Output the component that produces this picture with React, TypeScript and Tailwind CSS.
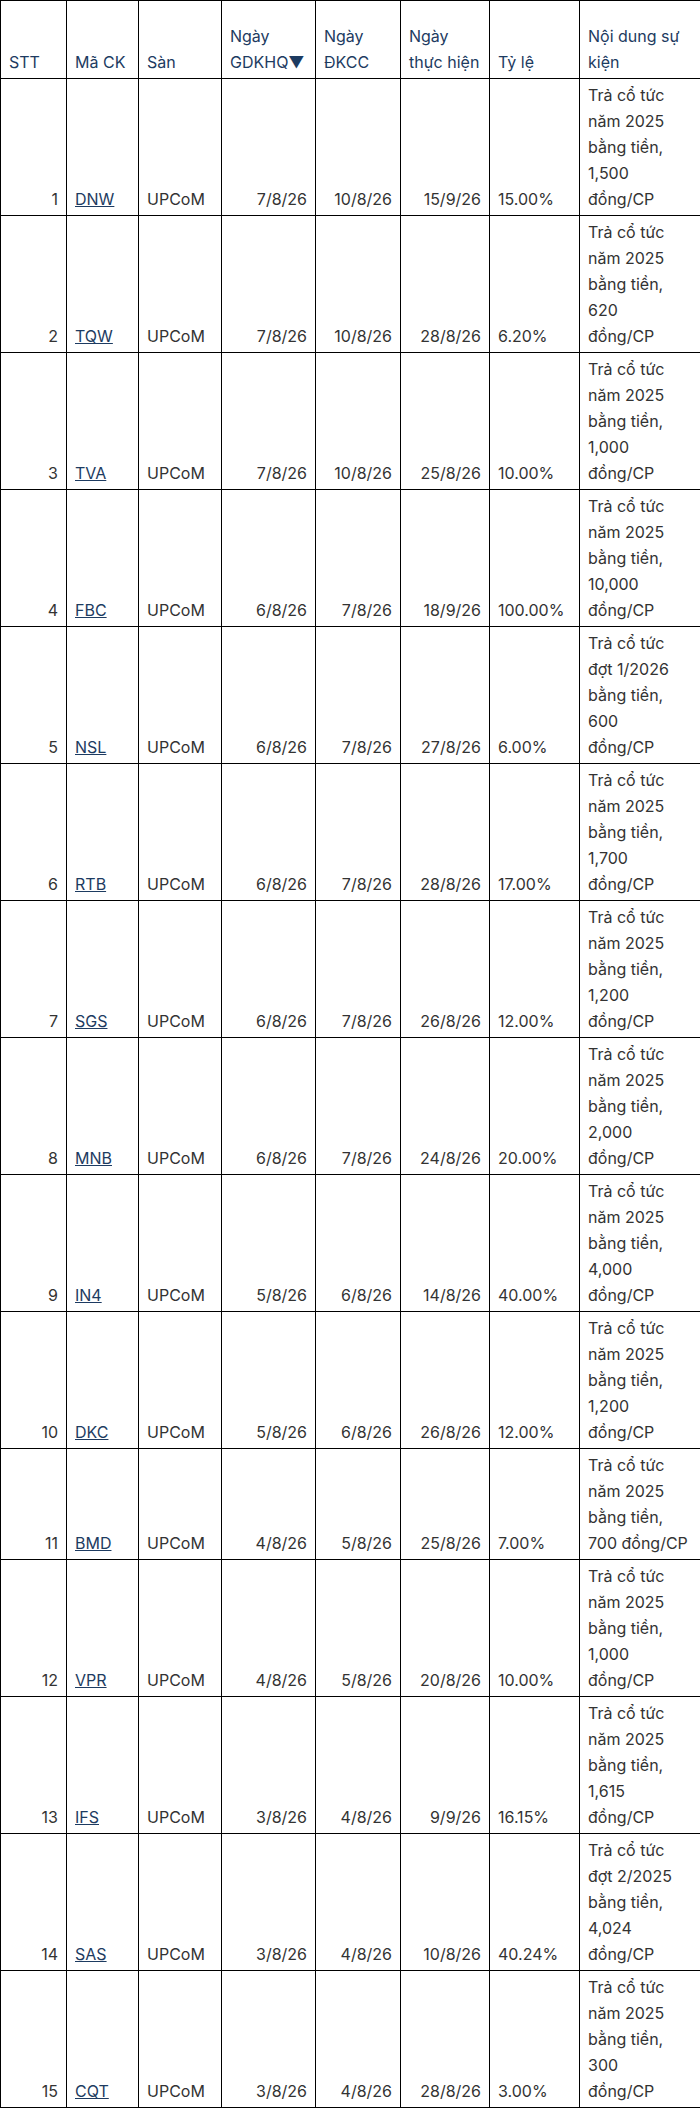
import React from 'react'

type Row = {
  stt: number
  code: string
  exchange: string
  exDate: string
  recordDate: string
  payDate: string
  ratio: string
  period: string
  amount: string
  // amount and "đồng/CP" stay on one line
  oneLine?: boolean
}

const rows: Row[] = [
  { stt: 1, code: 'DNW', exchange: 'UPCoM', exDate: '7/8/26', recordDate: '10/8/26', payDate: '15/9/26', ratio: '15.00%', period: 'năm 2025', amount: '1,500' },
  { stt: 2, code: 'TQW', exchange: 'UPCoM', exDate: '7/8/26', recordDate: '10/8/26', payDate: '28/8/26', ratio: '6.20%', period: 'năm 2025', amount: '620' },
  { stt: 3, code: 'TVA', exchange: 'UPCoM', exDate: '7/8/26', recordDate: '10/8/26', payDate: '25/8/26', ratio: '10.00%', period: 'năm 2025', amount: '1,000' },
  { stt: 4, code: 'FBC', exchange: 'UPCoM', exDate: '6/8/26', recordDate: '7/8/26', payDate: '18/9/26', ratio: '100.00%', period: 'năm 2025', amount: '10,000' },
  { stt: 5, code: 'NSL', exchange: 'UPCoM', exDate: '6/8/26', recordDate: '7/8/26', payDate: '27/8/26', ratio: '6.00%', period: 'đợt 1/2026', amount: '600' },
  { stt: 6, code: 'RTB', exchange: 'UPCoM', exDate: '6/8/26', recordDate: '7/8/26', payDate: '28/8/26', ratio: '17.00%', period: 'năm 2025', amount: '1,700' },
  { stt: 7, code: 'SGS', exchange: 'UPCoM', exDate: '6/8/26', recordDate: '7/8/26', payDate: '26/8/26', ratio: '12.00%', period: 'năm 2025', amount: '1,200' },
  { stt: 8, code: 'MNB', exchange: 'UPCoM', exDate: '6/8/26', recordDate: '7/8/26', payDate: '24/8/26', ratio: '20.00%', period: 'năm 2025', amount: '2,000' },
  { stt: 9, code: 'IN4', exchange: 'UPCoM', exDate: '5/8/26', recordDate: '6/8/26', payDate: '14/8/26', ratio: '40.00%', period: 'năm 2025', amount: '4,000' },
  { stt: 10, code: 'DKC', exchange: 'UPCoM', exDate: '5/8/26', recordDate: '6/8/26', payDate: '26/8/26', ratio: '12.00%', period: 'năm 2025', amount: '1,200' },
  { stt: 11, code: 'BMD', exchange: 'UPCoM', exDate: '4/8/26', recordDate: '5/8/26', payDate: '25/8/26', ratio: '7.00%', period: 'năm 2025', amount: '700', oneLine: true },
  { stt: 12, code: 'VPR', exchange: 'UPCoM', exDate: '4/8/26', recordDate: '5/8/26', payDate: '20/8/26', ratio: '10.00%', period: 'năm 2025', amount: '1,000' },
  { stt: 13, code: 'IFS', exchange: 'UPCoM', exDate: '3/8/26', recordDate: '4/8/26', payDate: '9/9/26', ratio: '16.15%', period: 'năm 2025', amount: '1,615' },
  { stt: 14, code: 'SAS', exchange: 'UPCoM', exDate: '3/8/26', recordDate: '4/8/26', payDate: '10/8/26', ratio: '40.24%', period: 'đợt 2/2025', amount: '4,024' },
  { stt: 15, code: 'CQT', exchange: 'UPCoM', exDate: '3/8/26', recordDate: '4/8/26', payDate: '28/8/26', ratio: '3.00%', period: 'năm 2025', amount: '300' },
]

const th = 'border border-black px-2 pt-[22px] pb-[3px] text-left align-bottom font-normal text-[#1d3b61]'
const td = 'border border-black px-2 py-[3px] align-bottom text-[#333333]'

export default function App() {
  return (
    <div className="w-[700px] bg-white font-['Inter',sans-serif] text-[16px] leading-[26px]">
      <table className="w-[700px] table-fixed border-collapse">
        <colgroup>
          <col className="w-[66px]" />
          <col className="w-[72px]" />
          <col className="w-[83px]" />
          <col className="w-[94px]" />
          <col className="w-[85px]" />
          <col className="w-[89px]" />
          <col className="w-[90px]" />
          <col className="w-[121px]" />
        </colgroup>
        <thead>
          <tr>
            <th className={th}>STT</th>
            <th className={th}>Mã CK</th>
            <th className={th}>Sàn</th>
            <th className={th}>Ngày GDKHQ▼</th>
            <th className={th}>Ngày ĐKCC</th>
            <th className={th}>Ngày thực hiện</th>
            <th className={th}>Tỷ lệ</th>
            <th className={th}>Nội dung sự kiện</th>
          </tr>
        </thead>
        <tbody>
          {rows.map((r) => (
            <tr key={r.stt}>
              <td className={`${td} text-right`}>{r.stt}</td>
              <td className={td}>
                <a href="#" className="text-[#1d3b61] underline">{r.code}</a>
              </td>
              <td className={td}>{r.exchange}</td>
              <td className={`${td} text-right`}>{r.exDate}</td>
              <td className={`${td} text-right`}>{r.recordDate}</td>
              <td className={`${td} text-right`}>{r.payDate}</td>
              <td className={td}>{r.ratio}</td>
              <td className={`${td} text-[#1d3b61]`}>
                Trả cổ tức {r.period} bằng tiền, {r.amount}
                {r.oneLine ? ' ' : <br />}
                đồng/CP
              </td>
            </tr>
          ))}
        </tbody>
      </table>
    </div>
  )
}
